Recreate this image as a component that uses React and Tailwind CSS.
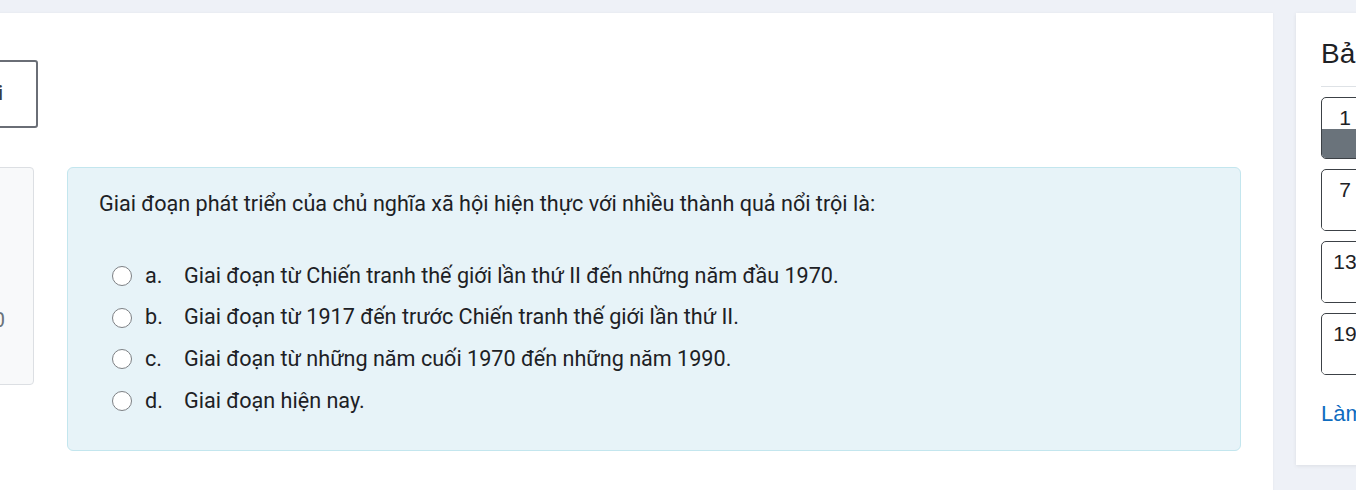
import React from "react";

const options = [
  { letter: "a.", text: "Giai đoạn từ Chiến tranh thế giới lần thứ II đến những năm đầu 1970." },
  { letter: "b.", text: "Giai đoạn từ 1917 đến trước Chiến tranh thế giới lần thứ II." },
  { letter: "c.", text: "Giai đoạn từ những năm cuối 1970 đến những năm 1990." },
  { letter: "d.", text: "Giai đoạn hiện nay." },
];

const navItems = [
  { num: 1, current: true },
  { num: 7 },
  { num: 13 },
  { num: 19 },
];

// Radio + label row
const Option = ({ letter, text }) => (
  <label className="flex items-center h-[41.7px] text-[21.6px] text-[#1d2125]">
    <span className="w-[20px] h-[20px] rounded-full border-[1.5px] border-[#7d8084] bg-white ml-[13px] shrink-0" />
    <span className="ml-[13px] w-[39px]">{letter}</span>
    <span>{text}</span>
  </label>
);

const NavButton = ({ num, current }) => (
  <div className="w-[48px] h-[62px] rounded-[5px] border border-[#3c4146] bg-white overflow-hidden flex flex-col shrink-0">
    <div className="h-[31px] flex items-end justify-center text-[21px] leading-none text-[#1d2125] pb-[1px]" style={{ fontFamily: '"Liberation Sans", Arial, sans-serif' }}>
      {num}
    </div>
    <div className={`flex-1 ${current ? "bg-[#6a737b]" : "bg-white"}`} />
  </div>
);

export default function App() {
  return (
    <div
      className="w-[1356px] h-[490px] overflow-hidden bg-[#eef1f7] pt-[13px] flex gap-[23px]"
      style={{ fontFamily: 'Roboto, "Noto Sans", sans-serif' }}
    >
      {/* Main content card */}
      <div className="ml-[-200px] w-[1473px] h-[600px] bg-white shrink-0 shadow-[0_0_2px_rgba(0,0,0,0.06)] pt-[47px]">
        <div className="flex justify-end w-[238px]">
          <button className="h-[68px] border-2 border-[#6a6e76] rounded-[3px] bg-white px-[33px] text-[21px] font-medium text-[#3a3e44]">
            Xem lại
          </button>
        </div>

        <div className="flex mt-[39px] pr-[32px]">
          <div className="w-[234px] h-[218px] bg-[#f8f9fa] border border-[#dcdfe3] rounded-[4px] flex flex-col justify-center items-end pr-[28px] text-[21px] text-[#6a737b] shrink-0">
            <span className="mt-[90px]">Điểm 1,00 của 1,0</span>
          </div>
          <div className="ml-[33px] flex-1 h-[284px] bg-[#e7f3f8] border border-[#c3e6ee] rounded-[6px] pl-[31px] pt-[22px]">
            <p className="text-[21.6px] text-[#1d2125] leading-[28px]">
              Giai đoạn phát triển của chủ nghĩa xã hội hiện thực với nhiều thành quả nổi trội là:
            </p>
            <div className="mt-[37px] flex flex-col">
              {options.map((o) => (
                <Option key={o.letter} {...o} />
              ))}
            </div>
          </div>
        </div>
      </div>

      {/* Quiz navigation */}
      <div className="w-[300px] h-[452px] bg-white shrink-0 shadow-[0_1px_4px_rgba(0,0,0,0.08)] pl-[25px] pt-[22px]">
        <h3 className="text-[28px] leading-[38px] text-[#1d2125] whitespace-nowrap" style={{ fontFamily: '"Liberation Sans", Arial, sans-serif' }}>
          Bảng điều hướng bài kiểm tra
        </h3>
        <div className="h-px bg-[#dee2e6] mt-[13px]" />
        <div className="mt-[10px] flex flex-wrap gap-x-[8px] gap-y-[10px] w-[340px]">
          {navItems.map((n) => (
            <div key={n.num} className="w-full flex">
              <NavButton {...n} />
            </div>
          ))}
        </div>
        <a className="block mt-[22px] text-[22px] text-[#0f6cbf] whitespace-nowrap" style={{ fontFamily: '"Liberation Sans", Arial, sans-serif' }}>
          Làm lại bài kiểm tra
        </a>
      </div>
    </div>
  );
}
